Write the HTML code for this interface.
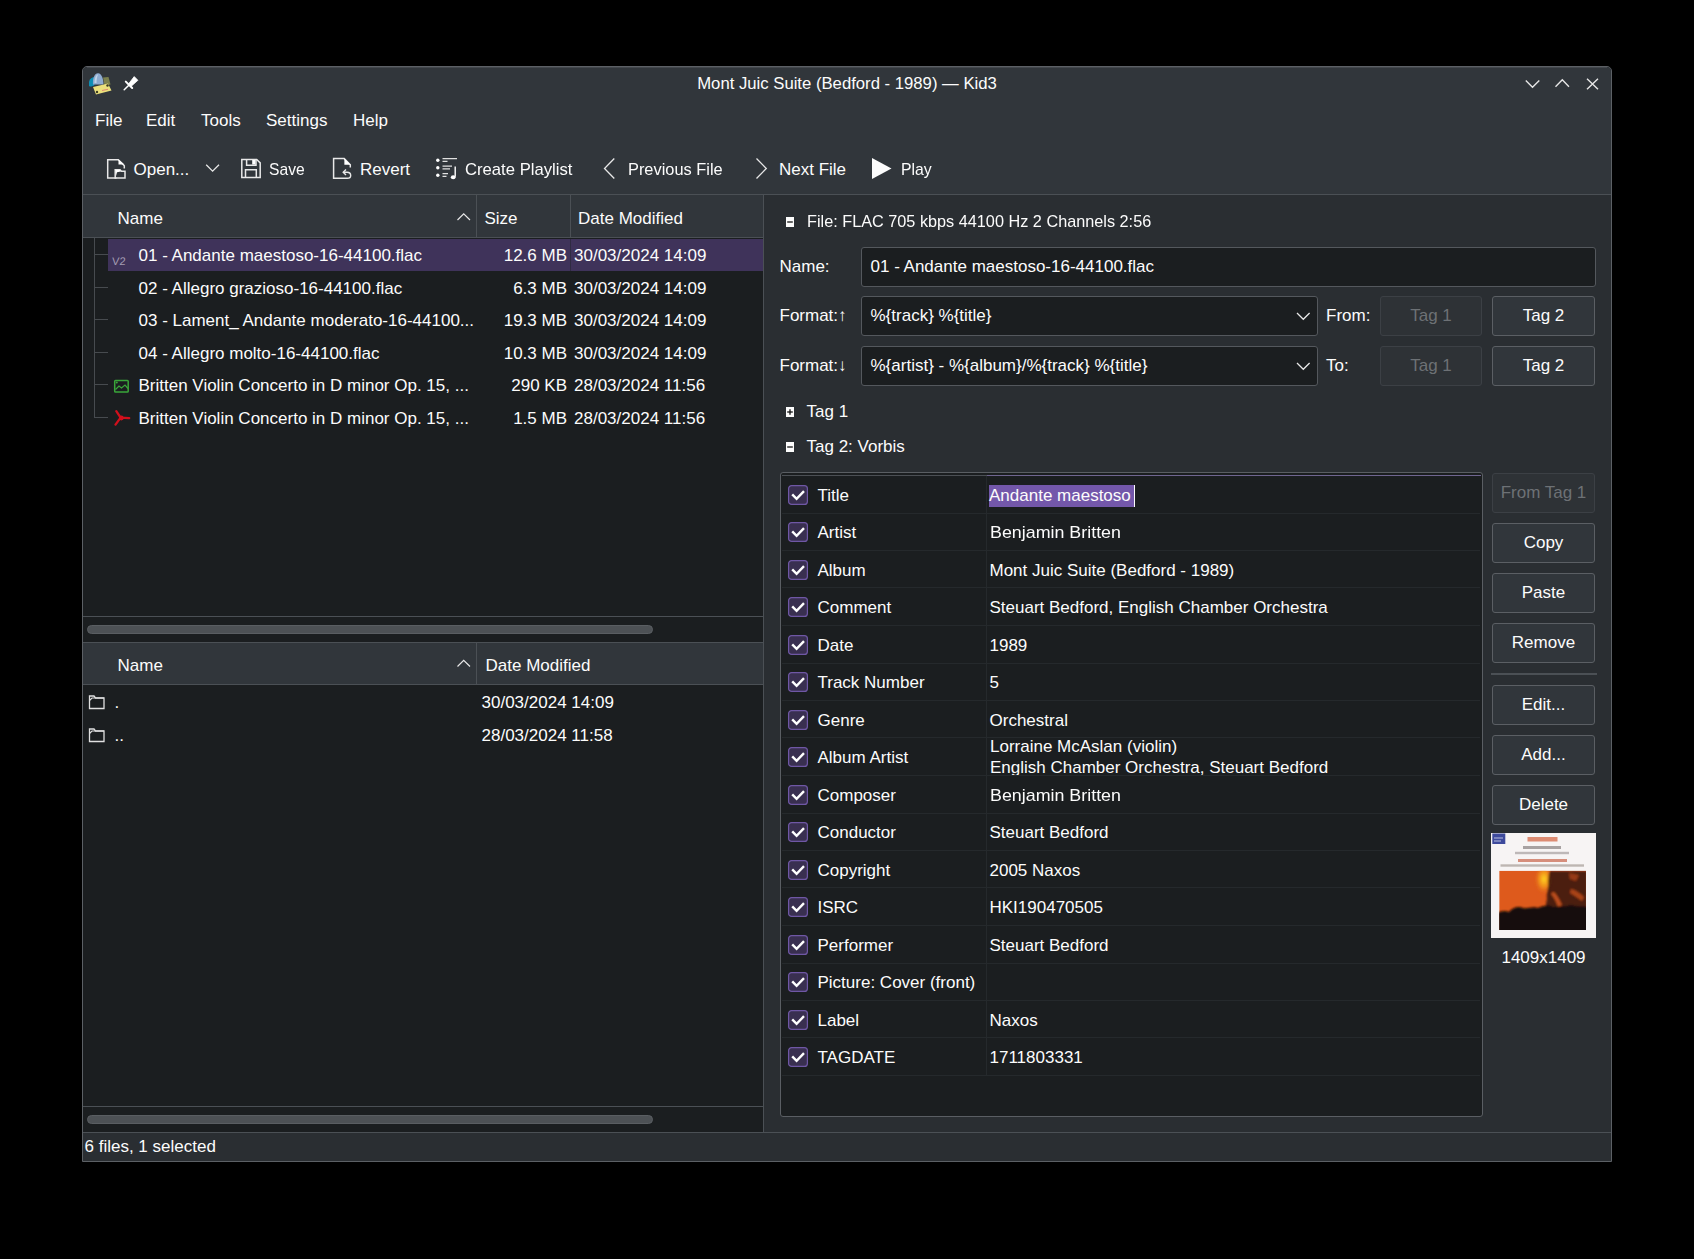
<!DOCTYPE html><html><head><meta charset="utf-8"><style>
html,body{margin:0;padding:0;background:#000;width:1694px;height:1259px;overflow:hidden}
body{position:relative;font-family:"Liberation Sans",sans-serif;font-size:17px;color:#fcfcfc}
.r{position:absolute}
.t{position:absolute;white-space:nowrap;line-height:20px}
svg{position:absolute;overflow:visible}
.btn{position:absolute;box-sizing:border-box;border:1px solid #5b5f64;border-radius:3px;background:#31363b}
.btnd{position:absolute;box-sizing:border-box;border:1px solid #3c4045;border-radius:3px;background:#2e3236}
.inp{position:absolute;box-sizing:border-box;border:1px solid #54585d;border-radius:3px;background:#1b1e20}
.c{text-align:center}
</style></head><body>
<div class="r" style="left:82px;top:66px;width:1530px;height:1096px;box-sizing:border-box;border:1px solid #5c6065;border-radius:5px 5px 0 0;background:#2a2e32"></div>
<div class="r" style="left:83px;top:67px;width:1528px;height:127px;background:#31363b;border-radius:4px 4px 0 0"></div>
<div class="r" style="left:87px;top:67px;width:1520px;height:1px;background:#43474c;"></div>
<div class="r" style="left:83px;top:194px;width:1528px;height:1px;background:#4b5055;"></div>
<div class="t c" style="left:83px;width:1528px;top:74.0px;font-size:16.7px">Mont Juic Suite (Bedford - 1989) — Kid3</div>
<div class="t " style="left:95px;top:111.30px;">File</div>
<div class="t " style="left:146px;top:111.30px;">Edit</div>
<div class="t " style="left:201px;top:111.30px;">Tools</div>
<div class="t " style="left:266px;top:111.30px;">Settings</div>
<div class="t " style="left:353px;top:111.30px;">Help</div>
<div class="t " style="left:133.5px;top:159.50px;">Open...</div>
<div class="t " style="left:268.5px;top:159.50px;transform:scaleX(0.92);transform-origin:0 0;">Save</div>
<div class="t " style="left:360px;top:159.50px;">Revert</div>
<div class="t " style="left:465px;top:159.50px;transform:scaleX(0.98);transform-origin:0 0;">Create Playlist</div>
<div class="t " style="left:628px;top:159.50px;transform:scaleX(0.963);transform-origin:0 0;">Previous File</div>
<div class="t " style="left:779px;top:159.50px;">Next File</div>
<div class="t " style="left:901px;top:159.50px;transform:scaleX(0.93);transform-origin:0 0;">Play</div>
<div class="r" style="left:83px;top:195px;width:680px;height:937px;background:#1b1e20;"></div>
<div class="r" style="left:763px;top:195px;width:1px;height:937px;background:#4b5055;"></div>
<div class="r" style="left:83px;top:195px;width:680px;height:42px;background:#31363b;"></div>
<div class="r" style="left:83px;top:237px;width:680px;height:1px;background:#4b5055;"></div>
<div class="r" style="left:476px;top:195px;width:1px;height:42px;background:#4b5055;"></div>
<div class="r" style="left:570px;top:195px;width:1px;height:42px;background:#4b5055;"></div>
<div class="t " style="left:117.5px;top:209.30px;">Name</div>
<div class="t " style="left:484.5px;top:209.30px;">Size</div>
<div class="t " style="left:578px;top:209.30px;">Date Modified</div>
<div class="r" style="left:108px;top:239px;width:655px;height:32px;background:#3f335a;"></div>
<div class="r" style="left:570px;top:239px;width:1px;height:32px;background:#2f2b42;"></div>
<div class="t " style="left:138.5px;top:246.30px;">01 - Andante maestoso-16-44100.flac</div>
<div class="t" style="left:470px;width:97px;text-align:right;top:246.30px">12.6 MB</div>
<div class="t " style="left:574px;top:246.30px;">30/03/2024 14:09</div>
<div class="t " style="left:138.5px;top:278.80px;">02 - Allegro grazioso-16-44100.flac</div>
<div class="t" style="left:470px;width:97px;text-align:right;top:278.80px">6.3 MB</div>
<div class="t " style="left:574px;top:278.80px;">30/03/2024 14:09</div>
<div class="t " style="left:138.5px;top:311.30px;">03 - Lament_ Andante moderato-16-44100...</div>
<div class="t" style="left:470px;width:97px;text-align:right;top:311.30px">19.3 MB</div>
<div class="t " style="left:574px;top:311.30px;">30/03/2024 14:09</div>
<div class="t " style="left:138.5px;top:343.80px;">04 - Allegro molto-16-44100.flac</div>
<div class="t" style="left:470px;width:97px;text-align:right;top:343.80px">10.3 MB</div>
<div class="t " style="left:574px;top:343.80px;">30/03/2024 14:09</div>
<div class="t " style="left:138.5px;top:376.30px;">Britten Violin Concerto in D minor Op. 15, ...</div>
<div class="t" style="left:470px;width:97px;text-align:right;top:376.30px">290 KB</div>
<div class="t " style="left:574px;top:376.30px;">28/03/2024 11:56</div>
<div class="t " style="left:138.5px;top:408.80px;">Britten Violin Concerto in D minor Op. 15, ...</div>
<div class="t" style="left:470px;width:97px;text-align:right;top:408.80px">1.5 MB</div>
<div class="t " style="left:574px;top:408.80px;">28/03/2024 11:56</div>
<div class="r" style="left:94px;top:238px;width:1px;height:180px;background:#474b4f;"></div>
<div class="r" style="left:95px;top:254px;width:13px;height:1px;background:#474b4f;"></div>
<div class="r" style="left:95px;top:287px;width:13px;height:1px;background:#474b4f;"></div>
<div class="r" style="left:95px;top:319px;width:13px;height:1px;background:#474b4f;"></div>
<div class="r" style="left:95px;top:352px;width:13px;height:1px;background:#474b4f;"></div>
<div class="r" style="left:95px;top:384px;width:13px;height:1px;background:#474b4f;"></div>
<div class="r" style="left:95px;top:417px;width:13px;height:1px;background:#474b4f;"></div>
<div class="r" style="left:83px;top:616px;width:680px;height:1px;background:#4b5055;"></div>
<div class="r" style="left:87px;top:625px;width:566px;height:9px;border-radius:5px;background:#4d5155;box-sizing:border-box;border:1px solid #5a5e62"></div>
<div class="r" style="left:83px;top:642px;width:680px;height:1px;background:#4b5055;"></div>
<div class="r" style="left:83px;top:643px;width:680px;height:41px;background:#31363b;"></div>
<div class="r" style="left:83px;top:684px;width:680px;height:1px;background:#4b5055;"></div>
<div class="r" style="left:476px;top:643px;width:1px;height:41px;background:#4b5055;"></div>
<div class="t " style="left:117.5px;top:655.60px;">Name</div>
<div class="t " style="left:485.5px;top:655.60px;">Date Modified</div>
<div class="t " style="left:114.5px;top:692.70px;">.</div>
<div class="t " style="left:481.5px;top:692.70px;">30/03/2024 14:09</div>
<div class="t " style="left:114.5px;top:725.70px;">..</div>
<div class="t " style="left:481.5px;top:725.70px;">28/03/2024 11:58</div>
<div class="r" style="left:83px;top:1106px;width:680px;height:1px;background:#4b5055;"></div>
<div class="r" style="left:87px;top:1115px;width:566px;height:9px;border-radius:5px;background:#4d5155;box-sizing:border-box;border:1px solid #5a5e62"></div>
<div class="r" style="left:83px;top:1132px;width:1528px;height:1px;background:#4b5055;"></div>
<div class="r" style="left:83px;top:1133px;width:1528px;height:28px;background:#2a2e32;"></div>
<div class="t " style="left:84.5px;top:1137.30px;">6 files, 1 selected</div>
<div class="t " style="left:807px;top:212.30px;transform:scaleX(0.956);transform-origin:0 0;">File: FLAC 705 kbps 44100 Hz 2 Channels 2:56</div>
<div class="t " style="left:779.5px;top:256.90px;">Name:</div>
<div class="inp" style="left:861px;top:247px;width:735px;height:40px"></div>
<div class="t " style="left:870.5px;top:256.90px;">01 - Andante maestoso-16-44100.flac</div>
<div class="t " style="left:779.5px;top:306.40px;">Format:↑</div>
<div class="inp" style="left:861px;top:296px;width:457px;height:40px"></div>
<div class="t " style="left:870.5px;top:306.40px;">%{track} %{title}</div>
<div class="t " style="left:1326px;top:306.40px;">From:</div>
<div class="btnd" style="left:1380px;top:296px;width:102px;height:40px"></div>
<div class="t c" style="left:1380px;width:102px;top:306.4px;color:#6d7175">Tag 1</div>
<div class="btn" style="left:1492px;top:296px;width:103px;height:40px"></div>
<div class="t c" style="left:1492px;width:103px;top:306.4px">Tag 2</div>
<div class="t " style="left:779.5px;top:356.40px;">Format:↓</div>
<div class="inp" style="left:861px;top:346px;width:457px;height:40px"></div>
<div class="t " style="left:870.5px;top:356.40px;">%{artist} - %{album}/%{track} %{title}</div>
<div class="t " style="left:1326px;top:356.40px;">To:</div>
<div class="btnd" style="left:1380px;top:346px;width:102px;height:40px"></div>
<div class="t c" style="left:1380px;width:102px;top:356.4px;color:#6d7175">Tag 1</div>
<div class="btn" style="left:1492px;top:346px;width:103px;height:40px"></div>
<div class="t c" style="left:1492px;width:103px;top:356.4px">Tag 2</div>
<div class="t " style="left:806.5px;top:402.30px;">Tag 1</div>
<div class="t " style="left:806.5px;top:436.70px;">Tag 2: Vorbis</div>
<div class="r" style="left:780px;top:472px;width:703px;height:645px;box-sizing:border-box;border:1px solid #5a5e63;border-radius:3px;background:#1b1e20"></div>
<div class="r" style="left:782px;top:475px;width:205px;height:1px;background:#4b4f54;"></div>
<div class="r" style="left:987px;top:475px;width:494px;height:1px;background:#6f6590;"></div>
<div class="r" style="left:986px;top:476px;width:1px;height:600px;background:#25292c;"></div>
<div class="r" style="left:782px;top:513px;width:698px;height:1px;background:#25292c;"></div>
<div class="t " style="left:817.5px;top:485.60px;">Title</div>
<svg style="left:788px;top:484.75px" width="20" height="20"><rect x="0.6" y="0.6" width="18.8" height="18.8" rx="3" fill="#392f50" stroke="#6f57a5" stroke-width="1.2"/><path d="M4.2 9.3 L8.6 13.8 L16 6.2" fill="none" stroke="#fff" stroke-width="2.4"/></svg>
<div class="r" style="left:989px;top:485px;width:145px;height:22px;background:#7357aa;"></div>
<div class="r" style="left:1134px;top:485px;width:1px;height:22px;background:#fcfcfc;"></div>
<div class="t " style="left:989px;top:485.60px;">Andante maestoso</div>
<div class="r" style="left:782px;top:550px;width:698px;height:1px;background:#25292c;"></div>
<div class="t " style="left:817.5px;top:523.10px;">Artist</div>
<svg style="left:788px;top:522.25px" width="20" height="20"><rect x="0.6" y="0.6" width="18.8" height="18.8" rx="3" fill="#392f50" stroke="#6f57a5" stroke-width="1.2"/><path d="M4.2 9.3 L8.6 13.8 L16 6.2" fill="none" stroke="#fff" stroke-width="2.4"/></svg>
<div class="t " style="left:989.5px;top:523.10px;transform:scaleX(1.05);transform-origin:0 0;">Benjamin Britten</div>
<div class="r" style="left:782px;top:587px;width:698px;height:1px;background:#25292c;"></div>
<div class="t " style="left:817.5px;top:560.60px;">Album</div>
<svg style="left:788px;top:559.75px" width="20" height="20"><rect x="0.6" y="0.6" width="18.8" height="18.8" rx="3" fill="#392f50" stroke="#6f57a5" stroke-width="1.2"/><path d="M4.2 9.3 L8.6 13.8 L16 6.2" fill="none" stroke="#fff" stroke-width="2.4"/></svg>
<div class="t " style="left:989.5px;top:560.60px;">Mont Juic Suite (Bedford - 1989)</div>
<div class="r" style="left:782px;top:625px;width:698px;height:1px;background:#25292c;"></div>
<div class="t " style="left:817.5px;top:598.10px;">Comment</div>
<svg style="left:788px;top:597.25px" width="20" height="20"><rect x="0.6" y="0.6" width="18.8" height="18.8" rx="3" fill="#392f50" stroke="#6f57a5" stroke-width="1.2"/><path d="M4.2 9.3 L8.6 13.8 L16 6.2" fill="none" stroke="#fff" stroke-width="2.4"/></svg>
<div class="t " style="left:989.5px;top:598.10px;">Steuart Bedford, English Chamber Orchestra</div>
<div class="r" style="left:782px;top:663px;width:698px;height:1px;background:#25292c;"></div>
<div class="t " style="left:817.5px;top:635.60px;">Date</div>
<svg style="left:788px;top:634.75px" width="20" height="20"><rect x="0.6" y="0.6" width="18.8" height="18.8" rx="3" fill="#392f50" stroke="#6f57a5" stroke-width="1.2"/><path d="M4.2 9.3 L8.6 13.8 L16 6.2" fill="none" stroke="#fff" stroke-width="2.4"/></svg>
<div class="t " style="left:989.5px;top:635.60px;">1989</div>
<div class="r" style="left:782px;top:700px;width:698px;height:1px;background:#25292c;"></div>
<div class="t " style="left:817.5px;top:673.10px;">Track Number</div>
<svg style="left:788px;top:672.25px" width="20" height="20"><rect x="0.6" y="0.6" width="18.8" height="18.8" rx="3" fill="#392f50" stroke="#6f57a5" stroke-width="1.2"/><path d="M4.2 9.3 L8.6 13.8 L16 6.2" fill="none" stroke="#fff" stroke-width="2.4"/></svg>
<div class="t " style="left:989.5px;top:673.10px;">5</div>
<div class="r" style="left:782px;top:737px;width:698px;height:1px;background:#25292c;"></div>
<div class="t " style="left:817.5px;top:710.60px;">Genre</div>
<svg style="left:788px;top:709.75px" width="20" height="20"><rect x="0.6" y="0.6" width="18.8" height="18.8" rx="3" fill="#392f50" stroke="#6f57a5" stroke-width="1.2"/><path d="M4.2 9.3 L8.6 13.8 L16 6.2" fill="none" stroke="#fff" stroke-width="2.4"/></svg>
<div class="t " style="left:989.5px;top:710.60px;">Orchestral</div>
<div class="r" style="left:782px;top:775px;width:698px;height:1px;background:#25292c;"></div>
<div class="t " style="left:817.5px;top:748.10px;">Album Artist</div>
<svg style="left:788px;top:747.25px" width="20" height="20"><rect x="0.6" y="0.6" width="18.8" height="18.8" rx="3" fill="#392f50" stroke="#6f57a5" stroke-width="1.2"/><path d="M4.2 9.3 L8.6 13.8 L16 6.2" fill="none" stroke="#fff" stroke-width="2.4"/></svg>
<div class="r" style="left:987px;top:738.5px;width:490px;height:36.5px;overflow:hidden"><div class="t" style="left:3px;top:-1.80px">Lorraine McAslan (violin)</div><div class="t" style="left:3px;top:19.90px">English Chamber Orchestra, Steuart Bedford</div></div>
<div class="r" style="left:782px;top:813px;width:698px;height:1px;background:#25292c;"></div>
<div class="t " style="left:817.5px;top:785.60px;">Composer</div>
<svg style="left:788px;top:784.75px" width="20" height="20"><rect x="0.6" y="0.6" width="18.8" height="18.8" rx="3" fill="#392f50" stroke="#6f57a5" stroke-width="1.2"/><path d="M4.2 9.3 L8.6 13.8 L16 6.2" fill="none" stroke="#fff" stroke-width="2.4"/></svg>
<div class="t " style="left:989.5px;top:785.60px;transform:scaleX(1.05);transform-origin:0 0;">Benjamin Britten</div>
<div class="r" style="left:782px;top:850px;width:698px;height:1px;background:#25292c;"></div>
<div class="t " style="left:817.5px;top:823.10px;">Conductor</div>
<svg style="left:788px;top:822.25px" width="20" height="20"><rect x="0.6" y="0.6" width="18.8" height="18.8" rx="3" fill="#392f50" stroke="#6f57a5" stroke-width="1.2"/><path d="M4.2 9.3 L8.6 13.8 L16 6.2" fill="none" stroke="#fff" stroke-width="2.4"/></svg>
<div class="t " style="left:989.5px;top:823.10px;">Steuart Bedford</div>
<div class="r" style="left:782px;top:887px;width:698px;height:1px;background:#25292c;"></div>
<div class="t " style="left:817.5px;top:860.60px;">Copyright</div>
<svg style="left:788px;top:859.75px" width="20" height="20"><rect x="0.6" y="0.6" width="18.8" height="18.8" rx="3" fill="#392f50" stroke="#6f57a5" stroke-width="1.2"/><path d="M4.2 9.3 L8.6 13.8 L16 6.2" fill="none" stroke="#fff" stroke-width="2.4"/></svg>
<div class="t " style="left:989.5px;top:860.60px;">2005 Naxos</div>
<div class="r" style="left:782px;top:925px;width:698px;height:1px;background:#25292c;"></div>
<div class="t " style="left:817.5px;top:898.10px;">ISRC</div>
<svg style="left:788px;top:897.25px" width="20" height="20"><rect x="0.6" y="0.6" width="18.8" height="18.8" rx="3" fill="#392f50" stroke="#6f57a5" stroke-width="1.2"/><path d="M4.2 9.3 L8.6 13.8 L16 6.2" fill="none" stroke="#fff" stroke-width="2.4"/></svg>
<div class="t " style="left:989.5px;top:898.10px;">HKI190470505</div>
<div class="r" style="left:782px;top:963px;width:698px;height:1px;background:#25292c;"></div>
<div class="t " style="left:817.5px;top:935.60px;">Performer</div>
<svg style="left:788px;top:934.75px" width="20" height="20"><rect x="0.6" y="0.6" width="18.8" height="18.8" rx="3" fill="#392f50" stroke="#6f57a5" stroke-width="1.2"/><path d="M4.2 9.3 L8.6 13.8 L16 6.2" fill="none" stroke="#fff" stroke-width="2.4"/></svg>
<div class="t " style="left:989.5px;top:935.60px;">Steuart Bedford</div>
<div class="r" style="left:782px;top:1000px;width:698px;height:1px;background:#25292c;"></div>
<div class="t " style="left:817.5px;top:973.10px;">Picture: Cover (front)</div>
<svg style="left:788px;top:972.25px" width="20" height="20"><rect x="0.6" y="0.6" width="18.8" height="18.8" rx="3" fill="#392f50" stroke="#6f57a5" stroke-width="1.2"/><path d="M4.2 9.3 L8.6 13.8 L16 6.2" fill="none" stroke="#fff" stroke-width="2.4"/></svg>
<div class="r" style="left:782px;top:1037px;width:698px;height:1px;background:#25292c;"></div>
<div class="t " style="left:817.5px;top:1010.60px;">Label</div>
<svg style="left:788px;top:1009.75px" width="20" height="20"><rect x="0.6" y="0.6" width="18.8" height="18.8" rx="3" fill="#392f50" stroke="#6f57a5" stroke-width="1.2"/><path d="M4.2 9.3 L8.6 13.8 L16 6.2" fill="none" stroke="#fff" stroke-width="2.4"/></svg>
<div class="t " style="left:989.5px;top:1010.60px;">Naxos</div>
<div class="r" style="left:782px;top:1075px;width:698px;height:1px;background:#25292c;"></div>
<div class="t " style="left:817.5px;top:1048.10px;">TAGDATE</div>
<svg style="left:788px;top:1047.25px" width="20" height="20"><rect x="0.6" y="0.6" width="18.8" height="18.8" rx="3" fill="#392f50" stroke="#6f57a5" stroke-width="1.2"/><path d="M4.2 9.3 L8.6 13.8 L16 6.2" fill="none" stroke="#fff" stroke-width="2.4"/></svg>
<div class="t " style="left:989.5px;top:1048.10px;">1711803331</div>
<div class="btnd" style="left:1492px;top:473px;width:103px;height:40px"></div>
<div class="t c" style="left:1492px;width:103px;top:483.4px;color:#6d7175">From Tag 1</div>
<div class="btn" style="left:1492px;top:523px;width:103px;height:40px"></div>
<div class="t c" style="left:1492px;width:103px;top:533.4px">Copy</div>
<div class="btn" style="left:1492px;top:573px;width:103px;height:40px"></div>
<div class="t c" style="left:1492px;width:103px;top:583.4px">Paste</div>
<div class="btn" style="left:1492px;top:623px;width:103px;height:40px"></div>
<div class="t c" style="left:1492px;width:103px;top:633.4px">Remove</div>
<div class="r" style="left:1491px;top:673px;width:106px;height:2px;background:#4b5055;"></div>
<div class="btn" style="left:1492px;top:685px;width:103px;height:40px"></div>
<div class="t c" style="left:1492px;width:103px;top:695.4px">Edit...</div>
<div class="btn" style="left:1492px;top:735px;width:103px;height:40px"></div>
<div class="t c" style="left:1492px;width:103px;top:745.4px">Add...</div>
<div class="btn" style="left:1492px;top:785px;width:103px;height:40px"></div>
<div class="t c" style="left:1492px;width:103px;top:795.4px">Delete</div>
<svg style="left:1491px;top:833px" width="105" height="105" viewBox="0 0 105 105"><defs><radialGradient id="glow" cx="0" cy="0" r="1" gradientUnits="userSpaceOnUse" gradientTransform="translate(53 46) scale(10 16)"><stop offset="0" stop-color="#ffd81e"/><stop offset="0.5" stop-color="#f59a1a" stop-opacity="0.8"/><stop offset="1" stop-color="#e05a1a" stop-opacity="0"/></radialGradient><filter id="bl" x="-5%" y="-5%" width="110%" height="110%"><feGaussianBlur stdDeviation="0.9"/></filter><clipPath id="pc"><rect x="8.2" y="37.7" width="86.8" height="59.2"/></clipPath></defs><rect width="105" height="105" fill="#f7f4f4"/><rect x="1.3" y="0.5" width="13" height="10.5" fill="#3e4a9c"/><path d="M3 5 H12 M3 8 H10" stroke="#b8bee0" stroke-width="1"/><rect x="36.5" y="4" width="30" height="4.5" fill="#d46a48" opacity="0.75"/><rect x="32" y="13" width="38" height="3" fill="#5a5050" opacity="0.5"/><rect x="24" y="18.8" width="54" height="2.4" fill="#6a6060" opacity="0.4"/><rect x="27" y="26" width="49" height="3" fill="#c4583c" opacity="0.65"/><rect x="9.5" y="31.3" width="83.5" height="2.4" fill="#6a5a50" opacity="0.4"/><g clip-path="url(#pc)"><rect x="8.2" y="37.7" width="86.8" height="59.2" fill="#de5a1c"/><g filter="url(#bl)"><ellipse cx="52" cy="48" rx="9" ry="12" fill="url(#glow)"/><path d="M59 38 L96 38 L96 84 L56 84 C55 78 54 72 56 66 C55 60 58 54 57 48 C58 44 57 41 59 38 Z" fill="#3c1a10" opacity="0.9"/><path d="M62 59 C65 60 68 66 71 72 L67 74 C65 68 63 64 60 61 Z" fill="#d2561c" opacity="0.85"/><path d="M80 56 C84 57 89 60 93 64 L91 68 C87 65 83 62 79 60 Z" fill="#c24c1a" opacity="0.8"/><path d="M78 40 L88 42 L85 48 L79 46 Z" fill="#b84416" opacity="0.7"/><path d="M6 80 C10 78 14 77 18 79 C22 74 28 73 32 75 C37 76 42 73 47 75 C52 73 57 71 62 74 C68 73 75 74 80 72 C86 74 91 73 97 74 L97 99 L6 99 Z" fill="#150a07"/></g></g></svg>
<div class="t c" style="left:1492px;width:103px;top:947.6px">1409x1409</div>
<svg style="left:86px;top:70px" width="28" height="28" viewBox="0 0 28 28"><path d="M3 11.5 C4 8.5 6 7.5 8 7 L8.5 15 C6.5 16.5 4.5 17 3 16 Z" fill="#0e8db3"/><path d="M7 14.5 C6.5 9 8 3.5 12 3.2 C15.5 3 17.5 9 17.5 14.5 Z" fill="#8eabcf"/><path d="M8.5 13 C8.5 9 9.5 5 12 4.5 C11 7 10.5 10 10.5 13 Z" fill="#c0d2e6"/><path d="M17 7.5 L22.5 7 L24.5 14.5 L18.5 15.5 Z" fill="#7b804e"/><path d="M7 17 L22 13.5 L25.5 20.5 L10 24.5 Z" fill="#ebe07c"/><path d="M16 20.5 L22 19.3" stroke="#e08a70" stroke-width="1"/><circle cx="11" cy="22" r="1.2" fill="#3a3a20"/><circle cx="21.5" cy="15.5" r="1.2" fill="#3a3a20"/></svg>
<svg style="left:120px;top:73px" width="20" height="20" viewBox="0 0 20 20"><path d="M4.2 16.8 L8.8 12.2" stroke="#fff" stroke-width="1.5" stroke-linecap="round"/><path d="M5.8 8.6 L12.2 15" stroke="#fff" stroke-width="2" stroke-linecap="round"/><path d="M8.3 11.3 L14.2 3.6 L17.9 7.3 L10.7 13.7 Z" fill="#fff" stroke="#fff" stroke-width="0.8" stroke-linejoin="round"/></svg>
<svg style="left:1520px;top:72px" width="90" height="24" viewBox="0 0 90 24"><path d="M5.8 8.5 L12.5 15.3 L19.3 8.5" fill="none" stroke="#e6e6e6" stroke-width="1.4"/><path d="M35.5 14.7 L42.3 7.8 L49 14.7" fill="none" stroke="#e6e6e6" stroke-width="1.4"/><path d="M67 6.8 L78 17.3 M78 6.8 L67 17.3" fill="none" stroke="#e6e6e6" stroke-width="1.4"/></svg>
<svg style="left:104px;top:156px" width="24" height="26" viewBox="0 0 24 26"><path d="M12.5 22 H3.7 V3.7 H14.3 L20.3 9.7 V12.5" fill="none" stroke="#e8e8e8" stroke-width="1.5"/><path d="M14.5 3.5 V8.5 H20.5 Z" fill="#fff"/><path d="M11.2 22 V13.8 H16 L17.5 15.3 H21 V22 Z" fill="none" stroke="#e8e8e8" stroke-width="1.5"/><path d="M11.5 14 H16 L17 15.5 L13 16.2 L12 20 Z" fill="#fff"/></svg>
<svg style="left:204px;top:162px" width="18" height="12" viewBox="0 0 18 12"><path d="M2.2 2.8 L8.6 9.2 L15 2.8" fill="none" stroke="#e8e8e8" stroke-width="1.3"/></svg>
<svg style="left:238px;top:156px" width="26" height="26" viewBox="0 0 26 26"><path d="M3.8 3.4 H18.7 L22.2 6.9 V21.4 H3.8 Z" fill="none" stroke="#e8e8e8" stroke-width="1.5"/><path d="M8.6 3.4 V9.2 H18 V3.4" fill="none" stroke="#e8e8e8" stroke-width="1.5"/><rect x="14.2" y="4" width="3.2" height="4.5" fill="#fff"/><path d="M7.5 21.4 V13.8 H18.3 V21.4" fill="none" stroke="#e8e8e8" stroke-width="1.5"/></svg>
<svg style="left:330px;top:156px" width="24" height="26" viewBox="0 0 24 26"><path d="M13 22.3 H3.6 V2.6 H14.2 L20.3 8.7 V11.5" fill="none" stroke="#e8e8e8" stroke-width="1.5"/><path d="M14.4 2.5 V8.7 H20.5 Z" fill="#fff"/><path d="M16 13.5 L13.2 16.2 L16 19" fill="none" stroke="#e8e8e8" stroke-width="1.4"/><path d="M13.5 16.2 H17 C19.5 16.2 20.7 17.8 20.7 19.5 C20.7 21.4 19.3 22.3 17.3 22.3 H13" fill="none" stroke="#e8e8e8" stroke-width="1.4"/></svg>
<svg style="left:434px;top:156px" width="26" height="26" viewBox="0 0 26 26"><circle cx="3.8" cy="4.3" r="1.7" fill="#fff"/><circle cx="3.8" cy="11.8" r="1.7" fill="#fff"/><circle cx="3.8" cy="19.3" r="1.7" fill="#fff"/><path d="M8.5 2.6 H23 M8.5 5.3 H13.5 M8.5 10.1 H18 M8.5 12.8 H16 M8.5 17.6 H14 M8.5 20.3 H12.5" stroke="#e0e0e0" stroke-width="1.2"/><path d="M21.2 10.5 V20.8" stroke="#fff" stroke-width="1.4"/><ellipse cx="19.2" cy="21.2" rx="2.4" ry="2" fill="#fff"/></svg>
<svg style="left:600px;top:156px" width="20" height="26" viewBox="0 0 20 26"><path d="M14.3 2.5 L4.5 12.5 L14.3 22.5" fill="none" stroke="#e8e8e8" stroke-width="1.3"/></svg>
<svg style="left:752px;top:156px" width="20" height="26" viewBox="0 0 20 26"><path d="M4.5 2.5 L14.3 12.5 L4.5 22.5" fill="none" stroke="#e8e8e8" stroke-width="1.3"/></svg>
<svg style="left:868px;top:156px" width="28" height="26" viewBox="0 0 28 26"><path d="M4 2 L23.5 12.5 L4 23 Z" fill="#fcfcfc"/></svg>
<svg style="left:455px;top:210px" width="18" height="14" viewBox="0 0 18 14"><path d="M2.5 10 L8.7 3.8 L15 10" fill="none" stroke="#e8e8e8" stroke-width="1.2"/></svg>
<svg style="left:455px;top:656px" width="18" height="14" viewBox="0 0 18 14"><path d="M2.5 10.5 L8.7 4.3 L15 10.5" fill="none" stroke="#e8e8e8" stroke-width="1.2"/></svg>
<div class="t" style="left:112px;top:251px;font-size:11px;color:#a39cb2;letter-spacing:0.3px;transform:skewX(-4deg)">V2</div>
<svg style="left:112px;top:377px" width="20" height="18" viewBox="0 0 20 18"><rect x="2.7" y="3.5" width="13.5" height="11.5" rx="0.8" fill="none" stroke="#3aa63a" stroke-width="1.5"/><path d="M3.5 12.5 L7 9 L9.5 11 L13 8 L16 11.5" fill="none" stroke="#3aa63a" stroke-width="1.2"/><circle cx="4.8" cy="5.5" r="1" fill="#3aa63a"/></svg>
<svg style="left:112px;top:408px" width="20" height="20" viewBox="0 0 20 20"><path d="M4.3 3.2 L8.6 9.6 L3.5 16.6 M8.6 9.6 L17.2 10.2" fill="none" stroke="#d2101c" stroke-width="2.3" stroke-linecap="round" stroke-linejoin="round"/><circle cx="9.3" cy="10" r="1.7" fill="none" stroke="#d2101c" stroke-width="1.4"/></svg>
<svg style="left:87px;top:693px" width="20" height="18" viewBox="0 0 20 18"><path d="M2.5 3 H7 L8.5 5 H17 V15.5 H2.5 Z" fill="none" stroke="#e0e0e0" stroke-width="1.3"/><path d="M2.5 7.5 L5 5 H17" fill="none" stroke="#e0e0e0" stroke-width="1.2"/></svg>
<svg style="left:87px;top:726px" width="20" height="18" viewBox="0 0 20 18"><path d="M2.5 3 H7 L8.5 5 H17 V15.5 H2.5 Z" fill="none" stroke="#e0e0e0" stroke-width="1.3"/><path d="M2.5 7.5 L5 5 H17" fill="none" stroke="#e0e0e0" stroke-width="1.2"/></svg>
<svg style="left:786px;top:217px" width="8" height="10" viewBox="0 0 8 10"><rect x="0" y="0" width="8" height="10" fill="#fcfcfc"/><path d="M1.2 5 H6.8" stroke="#111" stroke-width="1.3"/></svg>
<svg style="left:786px;top:407px" width="8" height="10" viewBox="0 0 8 10"><rect x="0" y="0" width="8" height="10" fill="#fcfcfc"/><path d="M1.2 5 H6.8" stroke="#111" stroke-width="1.3"/><path d="M4 2.2 V7.8" stroke="#111" stroke-width="1.3"/></svg>
<svg style="left:786px;top:442px" width="8" height="10" viewBox="0 0 8 10"><rect x="0" y="0" width="8" height="10" fill="#fcfcfc"/><path d="M1.2 5 H6.8" stroke="#111" stroke-width="1.3"/></svg>
<svg style="left:1294px;top:311px" width="18" height="12" viewBox="0 0 18 12"><path d="M3 2 L9.3 8.3 L15.6 2" fill="none" stroke="#e8e8e8" stroke-width="1.3"/></svg>
<svg style="left:1294px;top:361px" width="18" height="12" viewBox="0 0 18 12"><path d="M3 2 L9.3 8.3 L15.6 2" fill="none" stroke="#e8e8e8" stroke-width="1.3"/></svg>
</body></html>
